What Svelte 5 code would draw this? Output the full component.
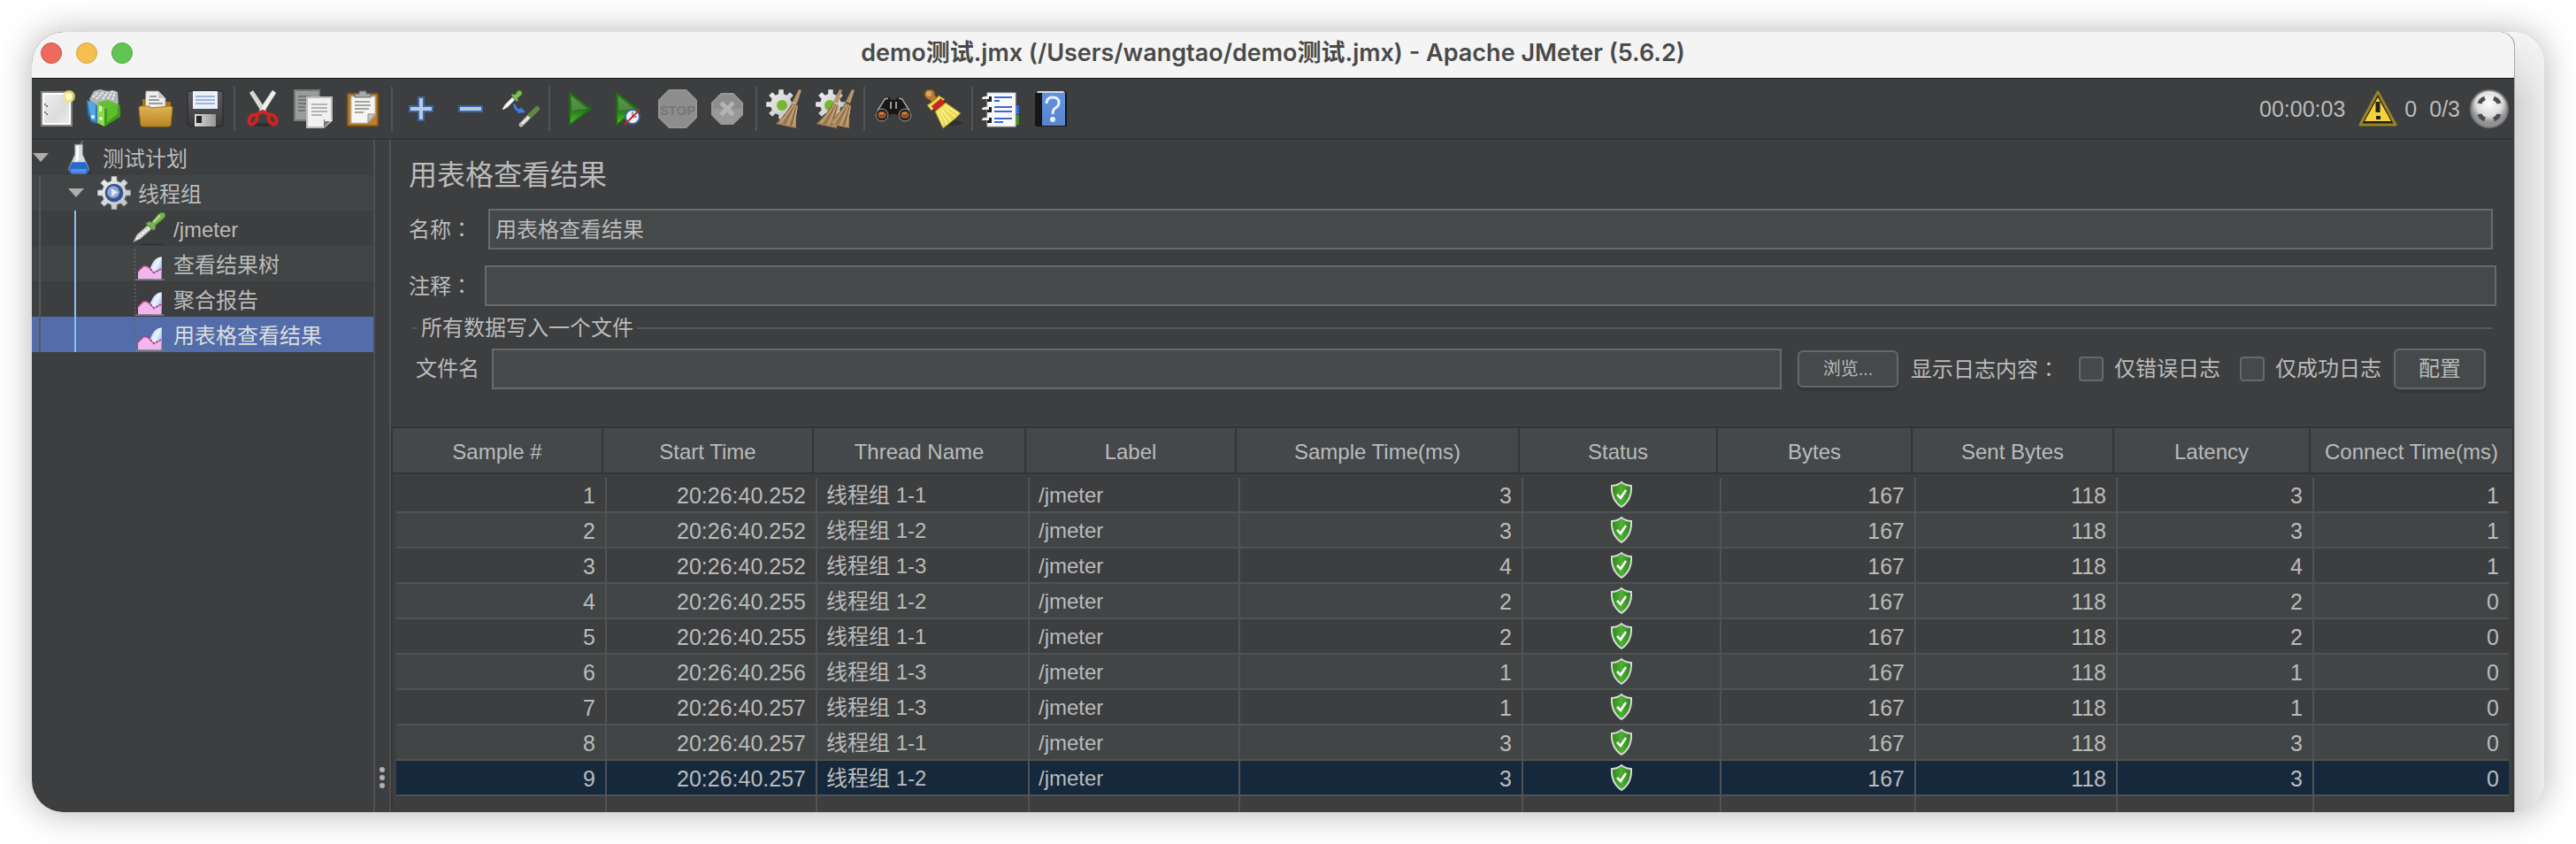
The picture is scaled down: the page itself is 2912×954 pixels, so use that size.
<script>
  const groups = [
    ['new', 'templates', 'open', 'save'],
    ['cut', 'copy', 'paste'],
    ['expand', 'collapse', 'toggle'],
    ['start', 'start without timers', 'stop', 'shutdown'],
    ['clear', 'clear all'],
    ['search', 'reset search'],
    ['function helper', 'help'],
  ];

  const tree = [
    { label: '测试计划', level: 0, icon: 'flask', open: true },
    { label: '线程组', level: 1, icon: 'gear', open: true },
    { label: '/jmeter', level: 2, icon: 'dropper' },
    { label: '查看结果树', level: 2, icon: 'chart' },
    { label: '聚合报告', level: 2, icon: 'chart' },
    { label: '用表格查看结果', level: 2, icon: 'chart', selected: true },
  ];

  const columns = ['Sample #', 'Start Time', 'Thread Name', 'Label', 'Sample Time(ms)', 'Status', 'Bytes', 'Sent Bytes', 'Latency', 'Connect Time(ms)'];

  const samples = [
    [1, '20:26:40.252', '线程组 1-1', 3, 3, 1],
    [2, '20:26:40.252', '线程组 1-2', 3, 3, 1],
    [3, '20:26:40.252', '线程组 1-3', 4, 4, 1],
    [4, '20:26:40.255', '线程组 1-2', 2, 2, 0],
    [5, '20:26:40.255', '线程组 1-1', 2, 2, 0],
    [6, '20:26:40.256', '线程组 1-3', 1, 1, 0],
    [7, '20:26:40.257', '线程组 1-3', 1, 1, 0],
    [8, '20:26:40.257', '线程组 1-1', 3, 3, 0],
    [9, '20:26:40.257', '线程组 1-2', 3, 3, 0],
  ];

  let name = $state('用表格查看结果');
  let comment = $state('');
  let file = $state('');
  let errorsOnly = $state(false);
  let successOnly = $state(false);

  // Outline of a cog with n teeth between the inner and outer radius.
  function cog(cx, cy, inner, outer, n = 8) {
    const points = [];
    const step = (Math.PI * 2) / n;
    for (let i = 0; i < n; i++) {
      const a = i * step - Math.PI / 2;
      for (const [offset, r] of [[-0.3, inner], [-0.2, outer], [0.2, outer], [0.3, inner]]) {
        const t = a + offset * step;
        points.push(`${(cx + r * Math.cos(t)).toFixed(1)},${(cy + r * Math.sin(t)).toFixed(1)}`);
      }
    }
    return points.join(' ');
  }
</script>

{#snippet straw(x)}
  <g transform="translate({x} 0)">
    <path d="M13 15l7 3-2 12v14L-5 39Q7 28 13 15z" fill="#a5845c" />
    <path d="M21 0l3 1-5 15-5-2z" fill="#b8946a" />
    <path d="M15 18L0 38M17 19L8 41M19 20l-4 22" stroke="#c9a97e" stroke-width="1.500" fill="none" />
    <path d="M16 19L4 39M18 20l-6 21M13 19L2 33" stroke="#7d5f3e" stroke-width="1" fill="none" />
  </g>
{/snippet}

{#snippet glyph(kind)}
  <svg viewBox="0 0 44 44" width="44" height="44" aria-hidden="true">
    {#if kind === 'new'}
      <rect x="5" y="3" width="34" height="38" fill="url(#paper)" stroke="#85877f" stroke-width="2" />
      <rect x="7" y="5" width="30" height="34" fill="none" stroke="#fff" stroke-width="2" />
      <path d="M8 17h2M10 19h2M8 26h2M10 28h2" stroke="#777" stroke-width="2" />
      <circle cx="36" cy="8" r="7" fill="#f2e36a" opacity=".8" />
      <circle cx="36" cy="8" r="4" fill="#fffcd0" />
    {:else if kind === 'templates'}
      <path d="M3 11l5-9 7-2 9 2 6-1 5 2 1 13-14 7-12 2z" fill="#aeb6b8" />
      <path d="M7 9l6-6M11 11l8-8M18 11l6-8M24 11l5-9M29 12l3-9" stroke="#e8eaeb" stroke-width="2" stroke-dasharray="3 1" />
      <path d="M0 12l10 4 4 6v17l-9-2-4-10z" fill="#2c78b9" />
      <path d="M1 13l9 3v20l-5-2z" fill="#55a7e2" />
      <path d="M12 15l8 4v23l-8-4z" fill="#8bd84a" />
      <path d="M20 19l8-5 10 5v12l-18 11z" fill="#3c9d1d" />
      <path d="M12 15l12-3 14 6-17 4z" fill="#65bf35" />
      <path d="M23 21l12-3v10l-12 9z" fill="#5dbd2b" />
      <circle cx="7" cy="31" r="2" fill="#e8f3ff" />
      <circle cx="16" cy="33" r="2" fill="#efffe5" />
      <rect x="14" y="19" width="3" height="6" fill="#d9f8c8" />
    {:else if kind === 'open'}
      <path d="M7 11h9l3 3h20v22H7z" fill="#a87414" />
      <path d="M11 2h14l8 8v15H10z" fill="#f0f0f0" stroke="#999" />
      <path d="M25 2v8h8z" fill="#cacaca" />
      <path d="M15 8h8M14 12h12M14 16h16" stroke="#9b9b9b" stroke-width="2" />
      <path d="M3 21q0-2 2-2h10l2 2 21-2q3 0 3 2l-2 19q0 2-3 2H8q-3 0-3-2z" fill="url(#folder)" stroke="#a4771d" />
    {:else if kind === 'save'}
      <path d="M4 2h36q2 0 2 2v36l-2 2H5l-3-3V4q0-2 2-2z" fill="url(#disk)" stroke="#252527" />
      <rect x="8" y="2" width="28" height="20" fill="#e9f1fb" />
      <path d="M11 8h22M11 12h22M11 16h22" stroke="#9fb6d6" stroke-width="2" />
      <rect x="10" y="28" width="24" height="14" fill="url(#metal)" />
      <path d="M12 30h6v8h-6z" fill="#262626" />
    {:else if kind === 'cut'}
      <ellipse cx="21" cy="40" rx="12" ry="2" fill="#2d2e30" />
      <path d="M6 4l4-3 12 18 3 5-3 3-4-4z" fill="#d9d9d6" />
      <path d="M36 4l-4-3-12 18-3 5 3 3 4-4z" fill="#f1f1ef" stroke="#aaa" stroke-width=".7" />
      <g fill="none" stroke="#cf2420" stroke-width="4">
        <ellipse cx="10" cy="34" rx="4" ry="6" transform="rotate(32 10 34)" />
        <ellipse cx="32" cy="34" rx="4" ry="6" transform="rotate(-32 32 34)" />
        <path d="M13 29l8-4 8 4" />
      </g>
    {:else if kind === 'copy'}
      <rect x="1" y="1" width="28" height="34" fill="#9b9d9d" stroke="#777979" stroke-width="2" />
      <path d="M5 8h14M5 12h12M5 16h12M5 20h8M5 24h8" stroke="#747676" stroke-width="2" />
      <path d="M15 9h28v26l-9 8H15z" fill="#f1f1f0" stroke="#bcbcbc" stroke-width="2" />
      <path d="M20 17h18M20 21h18M20 25h18M20 29h12" stroke="#b4b4b2" stroke-width="2" />
      <path d="M43 34h-9v9z" fill="#777" /><path d="M35 35h8" stroke="#eee" stroke-width="2" />
    {:else if kind === 'paste'}
      <rect x="5" y="5" width="34" height="36" rx="1" fill="#bd812b" stroke="#8b5a17" stroke-width="2" />
      <path d="M9 8h27v21l-8 9H9z" fill="#f5f5f3" stroke="#bbb" />
      <path d="M13 14h17M13 18h18M13 22h16M13 26h10" stroke="#a5a5a3" stroke-width="2" />
      <path d="M36 28h-8v10z" fill="#c4c4c2" stroke="#8d8d8b" />
      <path d="M13 9V5h5V2h8v3h5v4z" fill="#a9aba7" stroke="#656763" />
    {:else if kind === 'expand'}
      <path d="M19 9h6v10h10v6H25v10h-6V25H9v-6h10z" fill="#b6cae5" stroke="#3967a8" stroke-width="2" />
    {:else if kind === 'collapse'}
      <rect x="9" y="19" width="26" height="6" fill="#b6cae5" stroke="#3967a8" stroke-width="2" />
    {:else if kind === 'toggle'}
      <path d="M2 23l3-6L15 7l3 3L8 20z" fill="#e5e6e4" stroke="#969894" />
      <path d="M3 22L15 10" stroke="#fff" stroke-width="2" />
      <path d="M13 5l3 1 4-5 4 1v4l-5 4 1 3-2 1-6-7z" fill="#80b957" stroke="#3d7028" />
      <path d="M16 16q2 7 7 6l-1-3 6 7-9 1 1-2q-5-1-6-8z" fill="#3e7df0" />
      <path d="M23 40l12-12" stroke="#b8b8b8" stroke-width="5" stroke-linecap="round" />
      <path d="M24 39l11-11" stroke="#eee" stroke-width="2" />
      <path d="M34 29l7-7" stroke="#628745" stroke-width="6" stroke-linecap="round" />
    {:else if kind === 'start'}
      <path d="M12 4l24 18-24 18z" fill="url(#play)" stroke="#236917" stroke-width="2" stroke-linejoin="round" />
      <path d="M14 8l18 14-18 2z" fill="#aacb98" opacity=".3" />
    {:else if kind === 'start without timers'}
      <path d="M9 4l24 18L9 40z" fill="url(#play)" stroke="#236917" stroke-width="2" stroke-linejoin="round" />
      <path d="M11 8l18 14-18 2z" fill="#aacb98" opacity=".3" />
      <circle cx="27" cy="31" r="8" fill="#f0f3f6" stroke="#3668a5" stroke-width="2" />
      <path d="M27 25v6h5" stroke="#778" stroke-width="1.500" fill="none" />
      <path d="M18 40l17-17" stroke="#cd2428" stroke-width="2" />
    {:else if kind === 'stop'}
      <path d="M12 0h20l12 12v20L32 44H12L0 32V12z" fill="#949494" />
      <path d="M13 2h18l11 11v18L31 42H13L2 31V13z" fill="#8d8d8d" />
      <text x="22" y="29" text-anchor="middle" class="stop">STOP</text>
    {:else if kind === 'shutdown'}
      <path d="M15 4h14l11 11v14L29 40H15L4 29V15z" fill="#999" />
      <path d="M15 6h14l9 9v7H6v-7z" fill="#8d8d8d" />
      <path d="M15 15l14 14M29 15L15 29" stroke="#b4b4b4" stroke-width="5" />
    {:else if kind === 'clear'}
      <polygon points={cog(17, 17, 12, 17)} fill="url(#steel)" />
      <circle cx="18" cy="18" r="6" fill="#76b82b" />
      {@render straw(16)}
    {:else if kind === 'clear all'}
      <polygon points={cog(17, 17, 12, 17)} fill="url(#steel)" />
      <circle cx="16" cy="18" r="6" fill="#76b82b" />
      {@render straw(6)}
      {@render straw(20)}
    {:else if kind === 'search'}
      <path d="M1 27L10 11l6-3 4 4h4l4-4 6 3 9 16-4 8-8 1-6-8h-6l-6 8-9-1z" fill="#171717" />
      <path d="M4 24l8-13 4-1M40 24l-8-13-4-1M19 14v8M25 14v8" stroke="#989898" stroke-width="2" fill="none" />
      <circle cx="9" cy="29" r="7" fill="#222" stroke="#a0a0a0" />
      <circle cx="35" cy="29" r="7" fill="#222" stroke="#a0a0a0" />
      <ellipse cx="9" cy="29" rx="5" ry="4" fill="#975022" />
      <ellipse cx="35" cy="29" rx="5" ry="4" fill="#975022" />
      <path d="M6 27h5M32 27h5" stroke="#cf8953" stroke-width="2" />
    {:else if kind === 'reset search'}
      <ellipse cx="32" cy="38" rx="12" ry="3" fill="#303032" />
      <path d="M1 5q1-5 6-5 6 0 6 7l5 6-6 5-5-6q-6-2-6-7z" fill="#b87930" stroke="#74491b" />
      <circle cx="6" cy="5" r="3" fill="#daa76a" />
      <path d="M17 7q-3 5-13 11l5 6 15-13z" fill="#eadb54" stroke="#93811a" />
      <path d="M20 10l4 6-11 8-4-5z" fill="#cc2520" />
      <path d="M25 15l17 12-6 6-14 11-9-19z" fill="#e9d951" stroke="#9a891d" />
      <path d="M24 18l15 9M22 20l14 11M20 22l11 14M18 23l9 17M16 25l6 16" stroke="#fff49b" stroke-width="1.500" />
    {:else if kind === 'function helper'}
      <rect x="36" y="18" width="6" height="10" fill="#3268dc" />
      <rect x="36" y="29" width="6" height="11" fill="#378d23" />
      <rect x="6" y="4" width="32" height="38" fill="#fafafa" stroke="#c4c4c4" />
      <path d="M14 9h20M14 20h20M14 25h20M14 33h20" stroke="#3a68dc" stroke-width="2" />
      <path d="M14 13h6M14 37h10" stroke="#3a68dc" stroke-width="2" />
      <path d="M6 8h5v6H6zM6 20h5v6H6zM6 32h5v6H6z" fill="#1f1f1f" />
      <path d="M0 10q1-3 8-2v3H0zM0 22q1-3 8-2v3H0zM0 34q1-3 8-2v3H0z" fill="#eee" />
    {:else if kind === 'help'}
      <path d="M4 5l3-3h31l2 2v38H5l-1-2z" fill="#161617" />
      <path d="M7 2h29l2 2H6z" fill="#d6dade" />
      <path d="M12 4h26v37H12z" fill="url(#book)" />
      <path d="M17 16q0-7 7-7t7 6q0 4-4 6-3 2-3 7" stroke="#eaf1ff" stroke-width="3" fill="none" />
      <circle cx="24" cy="34" r="3" fill="#eaf1ff" />
    {:else if kind === 'warning'}
      <path d="M22 3l20 37H2z" fill="#1f1d12" stroke="#968328" stroke-width="3" stroke-linejoin="round" />
      <path d="M22 9l15 27H7z" fill="#f2d33c" />
      <path d="M22 14v12" stroke="#222" stroke-width="5" />
      <rect x="20" y="30" width="5" height="4" fill="#222" />
    {:else if kind === 'threads'}
      <circle cx="22" cy="22" r="21" fill="url(#ball)" stroke="#77797b" stroke-width="2" />
      <path d="M11 16q1-4 6-6M33 16q-1-4-6-6M11 28q1 4 6 6M33 28q-1 4-6 6" stroke="#4b4c4d" stroke-width="5" fill="none" />
    {:else if kind === 'flask'}
      <ellipse cx="22" cy="41" rx="16" ry="3" fill="#2e3033" />
      <path d="M24 7l3-7" stroke="#777" stroke-width="2" />
      <path d="M17 5h10v13l8 18q1 6-4 7H13q-5-1-4-7l8-18z" fill="#d7dade" stroke="#909499" />
      <path d="M13 28h18l4 9q1 5-4 6H13q-5-1-4-6z" fill="#2967c9" />
      <path d="M11 37h22l-2 5H13z" fill="#4f91f3" />
      <path d="M19 7h3v17l-4 5z" fill="#fff" />
    {:else if kind === 'gear'}
      <polygon points={cog(22, 22, 16, 22)} fill="url(#steel)" stroke="#8a8c8e" stroke-width=".7" />
      <circle cx="22" cy="22" r="12" fill="#34548f" />
      <circle cx="21" cy="21" r="8" fill="#8fa7d1" />
      <path d="M18 16l9 5-8 6z" fill="#e3e9f4" />
    {:else if kind === 'dropper'}
      <ellipse cx="24" cy="43" rx="16" ry="1" fill="#2d2f30" />
      <path d="M1 40l4-9 17-15 5 5-17 15z" fill="#cfd0cf" stroke="#868886" />
      <path d="M5 36l18-16" stroke="#fff" stroke-width="2" stroke-dasharray="3 2" />
      <path d="M21 13l4 1 9-11q4-3 8-1 2 4-1 7L30 18v5l-3 2-10-9z" fill="#78b152" stroke="#3f712a" />
      <path d="M27 14l9-9" stroke="#b1dc8f" stroke-width="3" />
    {:else if kind === 'chart'}
      <path d="M3 3v39" stroke="#66686c" stroke-width="2" stroke-dasharray="2 3" />
      <path d="M3 43h38" stroke="#77797c" stroke-width="2" />
      <path d="M22 32q4-18 16-19v29H28z" fill="url(#blueArea)" />
      <path d="M7 42v-9l7-8 7 1 8 9 8-5v12z" fill="#efb7eb" />
      <path d="M7 32l7-7h5l9 9 9-5" stroke="#b83678" stroke-width="2" fill="none" stroke-dasharray="4 1" />
    {/if}
  </svg>
{/snippet}

<!-- Shared gradients for the icon set -->
<svg class="defs" width="0" height="0" aria-hidden="true">
  <defs>
    <linearGradient id="paper" x1="0" y1="0" x2="1" y2="1"><stop stop-color="#f1f1f1" /><stop offset=".6" stop-color="#dcdcdc" /><stop offset="1" stop-color="#efefef" /></linearGradient>
    <linearGradient id="folder" x1="0" y1="0" x2="0" y2="1"><stop stop-color="#e0b455" /><stop offset="1" stop-color="#b98422" /></linearGradient>
    <linearGradient id="disk" x1="0" y1="0" x2="0" y2="1"><stop stop-color="#5e5e62" /><stop offset="1" stop-color="#39393c" /></linearGradient>
    <linearGradient id="metal"><stop stop-color="#dcdcdc" /><stop offset="1" stop-color="#969696" /></linearGradient>
    <linearGradient id="play" x1="0" y1="0" x2="0" y2="1"><stop stop-color="#3d8530" /><stop offset=".5" stop-color="#246f18" /><stop offset="1" stop-color="#4ec92c" /></linearGradient>
    <linearGradient id="steel" x1="0" y1="0" x2="1" y2="1"><stop stop-color="#f5f5f5" /><stop offset="1" stop-color="#b9babb" /></linearGradient>
    <linearGradient id="book" x1="0" y1="0" x2="0" y2="1"><stop stop-color="#6093e0" /><stop offset="1" stop-color="#5a84ce" /></linearGradient>
    <radialGradient id="ball" cx=".5" cy=".35"><stop stop-color="#fff" /><stop offset=".7" stop-color="#dcdcdc" /><stop offset="1" stop-color="#929394" /></radialGradient>
    <linearGradient id="blueArea" x1="0" y1="0" x2="1" y2="1"><stop stop-color="#8eb6f0" /><stop offset=".45" stop-color="#eef5ff" /><stop offset="1" stop-color="#74a3ea" /></linearGradient>
    <linearGradient id="shield"><stop stop-color="#2d861d" /><stop offset=".5" stop-color="#4eb234" /><stop offset="1" stop-color="#2d7d1e" /></linearGradient>
  </defs>
</svg>

<div class="page">
  <div class="backdrop">
    <div class="window">
      <header class="titlebar">
        <div class="lights"><i class="red"></i><i class="yellow"></i><i class="green"></i></div>
        <h1>demo测试.jmx (/Users/wangtao/demo测试.jmx) - Apache JMeter (5.6.2)</h1>
      </header>

      <div class="toolbar">
        {#each groups as group, g}
          {#if g > 0}<span class="divider"></span>{/if}
          {#each group as kind}
            <button class="tool" type="button" aria-label={kind}>{@render glyph(kind)}</button>
          {/each}
        {/each}
        <div class="status">
          <span>00:00:03</span>
          <span class="warn">{@render glyph('warning')}</span>
          <span>0</span>
          <span class="threads">0/3</span>
          {@render glyph('threads')}
        </div>
      </div>

      <div class="body">
        <nav class="tree">
          {#each tree as node}
            <div class="node" class:selected={node.selected}>
              {#each Array(node.level) as _, i}
                <span class="guide" class:active={i === 1}></span>
              {/each}
              <span class="twisty">
                {#if node.open}<svg width="18" height="10" viewBox="0 0 18 10"><path d="M0 0h18L9 10z" fill="#adadad" /></svg>{/if}
              </span>
              <span class="node-icon">{@render glyph(node.icon)}</span>
              <span class="node-label">{node.label}</span>
            </div>
          {/each}
        </nav>
        <div class="splitter"><i></i><i></i><i></i></div>

        <main>
          <form onsubmit={(e) => e.preventDefault()}>
            <h2>用表格查看结果</h2>
            <div class="row name">
              <label for="name">名称<span class="colon">：</span></label>
              <input id="name" type="text" bind:value={name} />
            </div>
            <div class="row comment">
              <label for="comment">注释<span class="colon">：</span></label>
              <input id="comment" type="text" bind:value={comment} />
            </div>
            <fieldset>
              <legend>所有数据写入一个文件</legend>
              <div class="row file">
                <label for="file">文件名</label>
                <input id="file" type="text" bind:value={file} />
                <button class="push small" type="button">浏览...</button>
                <span class="show">显示日志内容<span class="colon">：</span></span>
                <label class="check"><input type="checkbox" bind:checked={errorsOnly} />仅错误日志</label>
                <label class="check"><input type="checkbox" bind:checked={successOnly} />仅成功日志</label>
                <button class="push" type="button">配置</button>
              </div>
            </fieldset>
          </form>

          <table>
            <thead>
              <tr>{#each columns as column}<th scope="col">{column}</th>{/each}</tr>
            </thead>
            <tbody>
              {#each samples as [id, start, thread, time, latency, connect]}
                <tr class:current={id === 9}>
                  <td>{id}</td>
                  <td>{start}</td>
                  <td class="text">{thread}</td>
                  <td class="text">/jmeter</td>
                  <td>{time}</td>
                  <td class="state">
                    <svg width="28" height="32" viewBox="0 0 28 32" role="img" aria-label="success">
                      <path d="M14 1q5 4 12 4 2 17-12 26Q0 22 2 5q7 0 12-4z" fill="#2c2e2f" opacity=".6" />
                      <path d="M14 2q5 4 11 4 1 16-11 24Q2 22 3 6q6 0 11-4z" fill="url(#shield)" stroke="#d6dad4" stroke-width="2" />
                      <path d="M9 16l4 4 6-9" stroke="#fff" stroke-width="2.500" fill="none" />
                    </svg>
                  </td>
                  <td>167</td>
                  <td>118</td>
                  <td>{latency}</td>
                  <td>{connect}</td>
                </tr>
              {/each}
              <tr class="blank" aria-hidden="true">{#each columns as _}<td></td>{/each}</tr>
            </tbody>
          </table>
        </main>
      </div>
    </div>
  </div>
</div>

<style>
  :global(body) { margin: 0; background: #fff; }
  * { box-sizing: border-box; }
  svg { display: block; flex: none; }
  .defs { position: absolute; }

  .page {
    min-height: 100vh;
    display: flex;
    padding: 36px;
    font: 24px/32px "Liberation Sans", "Noto Sans CJK SC", sans-serif;
    color: #bbb;
    overflow: hidden;
  }
  .backdrop {
    flex: 1;
    min-width: 0;
    display: flex;
    padding-right: 34px;
    border-radius: 36px;
    background: linear-gradient(#f5f5f5, transparent 80px), linear-gradient(to left, #ececec, #d2d2d2 34px);
    box-shadow: 0 1px 38px rgba(0, 0, 0, .3);
  }
  .window {
    flex: 1;
    min-width: 0;
    display: flex;
    flex-direction: column;
    border-radius: 36px 16px 0 36px;
    background: #3d3e40;
    box-shadow: 1px 0 0 #a8a8a8;
    overflow: hidden;
  }

  .titlebar {
    display: grid;
    grid-template-columns: 1fr auto 1fr;
    align-items: center;
    height: 53px;
    padding-bottom: 4px;
    background: #f4f4f4;
    border-bottom: 1px solid #161718;
  }
  .lights { display: flex; gap: 16px; padding-left: 10px; }
  .lights i { width: 24px; height: 24px; border-radius: 50%; border: 1px solid; }
  .lights .red { background: #ec6a5e; border-color: #d05147; }
  .lights .yellow { background: #f4bf4f; border-color: #d6a243; }
  .lights .green { background: #61c554; border-color: #51a73e; }
  h1 {
    margin: 0;
    font: 600 27px/32px Inter, "Noto Sans CJK SC", sans-serif;
    color: #4a4a4a;
    white-space: nowrap;
  }

  .toolbar {
    display: flex;
    align-items: center;
    height: 69px;
    border-bottom: 2px solid #343537;
  }
  .tool {
    width: 56px;
    height: 56px;
    padding: 6px;
    border: 0;
    background: none;
  }
  .divider { width: 2px; height: 50px; margin: 0 4px; background: #535456; }
  .stop { font: bold 18px/20px "Liberation Sans Narrow", "Liberation Sans", sans-serif; font-size: 15px; fill: #777; }
  .status { display: flex; align-items: center; margin-left: auto; padding-right: 6px; font-size: 25px; }
  .warn { margin: 0 8px 0 15px; }
  .threads { margin: 0 11px 0 14px; }

  .body { flex: 1; display: flex; min-height: 0; }
  .tree { width: 388px; flex: none; border-right: 2px solid #4f5052; }
  .node { display: flex; align-items: center; height: 40px; white-space: nowrap; }
  .node:nth-child(even) { background: #414546; }
  .node.selected { background: #526daa; color: #ddd; }
  .node-label { padding-top: 3px; }
  .guide { width: 40px; align-self: stretch; padding-left: 8px; }
  .guide::before { content: ""; display: block; width: 2px; height: 100%; background: #56585a; }
  .guide.active::before { background: #8abdf8; }
  .twisty { width: 34px; padding-left: 1px; }
  .node-icon { width: 38px; margin-right: 8px; }
  .node-icon svg { width: 38px; height: 38px; }
  .splitter {
    width: 16px;
    flex: none;
    display: flex;
    flex-direction: column;
    justify-content: flex-end;
    align-items: center;
    gap: 3px;
    padding-bottom: 27px;
  }
  .splitter i { width: 6px; height: 6px; border-radius: 50%; background: #b0b0b0; }

  main { flex: 1; min-width: 0; border-left: 2px solid #4f5052; }
  form { padding: 20px 20px 42px; }
  h2 { margin: 0 0 18px; font-size: 32px; line-height: 40px; font-weight: 400; }
  .row { display: flex; align-items: center; white-space: nowrap; }
  .row.name { gap: 18px; padding-right: 4px; margin-bottom: 18px; }
  .row.comment { gap: 14px; margin-bottom: 12px; }
  .colon { font-family: "Noto Sans CJK TC", sans-serif; }
  input[type="text"] {
    flex: 1;
    min-width: 0;
    height: 46px;
    padding: 0 6px 3px;
    border: 2px solid #686a6b;
    border-radius: 0;
    background: #45494a;
    color: #bbb;
    font: inherit;
  }
  fieldset { margin: 0 4px; padding: 10px 8px 0 4px; border: 0; border-top: 2px solid #55575a; min-width: 0; }
  legend { margin-left: 2px; padding: 0 4px; line-height: 26px; }
  .file > label:first-child { margin-right: 14px; }
  .push {
    min-width: 104px;
    height: 46px;
    margin-left: 14px;
    padding: 0;
    border: 2px solid #666869;
    border-radius: 6px;
    background: #45494a;
    box-shadow: 0 4px 0 #353739;
    color: #bbb;
    font: inherit;
  }
  .push.small { min-width: 114px; height: 42px; margin: 0 14px 0 18px; font-size: 20px; }
  .check { display: flex; align-items: center; margin-left: 22px; }
  .check input {
    appearance: none;
    width: 28px;
    height: 28px;
    margin: 0 12px 0 0;
    border: 2px solid #666869;
    border-radius: 4px;
    background: #45494a;
  }
  .check input:checked { background: #8abdf8; }

  table {
    display: block;
    border: 2px solid #353739;
    border-width: 0 2px;
  }
  thead, tbody { display: block; }
  tr {
    display: grid;
    grid-template-columns:
      minmax(0, 238fr) minmax(0, 238fr) minmax(0, 240fr) minmax(0, 238fr) minmax(0, 320fr)
      minmax(0, 224fr) minmax(0, 220fr) minmax(0, 228fr) minmax(0, 222fr) minmax(0, 228fr);
  }
  thead { background: #44484a; border: 2px solid #333537; border-width: 2px 0; }
  th {
    height: 50px;
    padding: 11px 0 7px;
    border-right: 2px solid #333537;
    line-height: 32px;
    font-weight: 400;
    white-space: nowrap;
    text-align: center;
  }
  th:last-child { border-right: 0; }

  /* Body cells sit 4px right of their headings; the overhang is clipped. */
  tbody { margin: 4px 4px 0; overflow: hidden; }
  tbody tr { width: calc(100% + 8px); height: 40px; }
  tbody tr:nth-child(even) { background: #414546; }
  tbody tr.current { background: #15283c; }
  tbody tr.blank { height: 18px; background: none; }
  td {
    padding: 4px 11px 2px 10px;
    border: 2px solid #505254;
    border-width: 0 2px 2px 0;
    font-size: 25px;
    text-align: right;
    white-space: nowrap;
  }
  td.text { font-size: 24px; text-align: left; }
  td:last-child { border-right: 0; padding-right: 19px; }
  .blank td { border-bottom: 0; padding: 0; }
  td.state { display: grid; place-items: center; padding: 0; }
</style>
